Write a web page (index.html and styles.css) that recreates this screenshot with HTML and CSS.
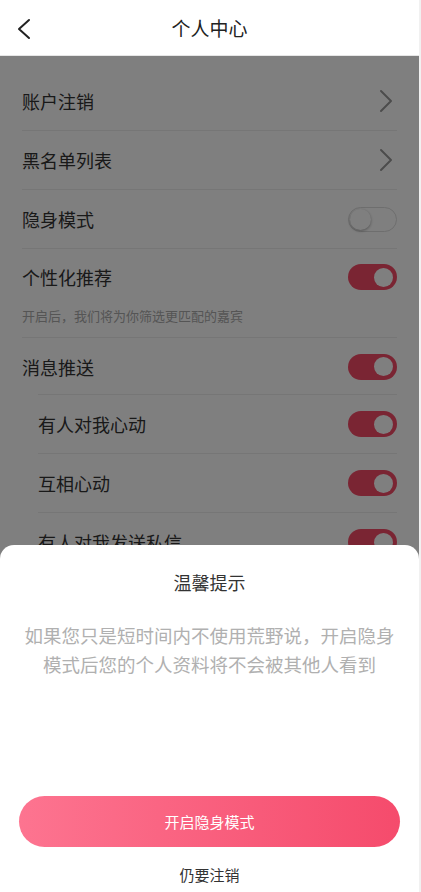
FILE: index.html
```html
<!DOCTYPE html>
<html lang="zh">
<head>
<meta charset="utf-8">
<link rel="stylesheet" href="styles.css">
</head>
<body>
<div class="page">
  <header class="header">
    <svg class="back" width="16" height="22" viewBox="0 0 16 22"><path d="M13 2 L3 11 L13 20" fill="none" stroke="#222" stroke-width="2" stroke-linecap="round" stroke-linejoin="round"/></svg>
    <h1 class="title">个人中心</h1>
  </header>
  <main class="list">
    <div class="row"><span class="label">账户注销</span><svg class="chev" width="14" height="24" viewBox="0 0 14 24"><path d="M2 2 L12 12 L2 22" fill="none" stroke="#999" stroke-width="2" stroke-linecap="round" stroke-linejoin="round"/></svg></div>
    <div class="row"><span class="label">黑名单列表</span><svg class="chev" width="14" height="24" viewBox="0 0 14 24"><path d="M2 2 L12 12 L2 22" fill="none" stroke="#999" stroke-width="2" stroke-linecap="round" stroke-linejoin="round"/></svg></div>
    <div class="row"><span class="label">隐身模式</span><span class="switch off"><span class="knob"></span></span></div>
    <div class="group">
      <div class="row plain"><span class="label">个性化推荐</span><span class="switch on"><span class="knob"></span></span></div>
      <p class="hint">开启后，我们将为你筛选更匹配的嘉宾</p>
    </div>
    <div class="row sub-line"><span class="label">消息推送</span><span class="switch on"><span class="knob"></span></span></div>
    <div class="row sub"><span class="label">有人对我心动</span><span class="switch on"><span class="knob"></span></span></div>
    <div class="row sub"><span class="label">互相心动</span><span class="switch on"><span class="knob"></span></span></div>
    <div class="row sub"><span class="label">有人对我发送私信</span><span class="switch on"><span class="knob"></span></span></div>
    <div class="row sub"><span class="label">有人给我评论</span><span class="switch on"><span class="knob"></span></span></div>
  </main>
  <div class="mask"></div>
  <section class="sheet">
    <h2 class="sheet-title">温馨提示</h2>
    <p class="sheet-text">如果您只是短时间内不使用荒野说，开启隐身模式后您的个人资料将不会被其他人看到</p>
    <div class="sheet-actions">
      <button class="primary">开启隐身模式</button>
      <button class="link">仍要注销</button>
    </div>
  </section>
</div>
</body>
</html>
```

FILE: styles.css
```css
* { box-sizing: border-box; margin: 0; padding: 0; }
html, body { width: 100%; height: 100%; overflow: hidden; }
body {
  font-family: "Noto Sans CJK SC", "Noto Sans", sans-serif;
  background: #f1f1f1;
  color: #333;
}
.page { position: relative; width: 419px; height: 892px; overflow: hidden; background: #fff; }
.header {
  height: 56px;
  display: flex;
  align-items: center;
  justify-content: center;
  position: relative;
  border-bottom: 1px solid #e6e6e6;
  background: #fff;
}
.back { position: absolute; left: 16px; top: 18px; }
.title { font-size: 19px; font-weight: 400; color: #222; }
.list { padding: 16px 22px 0 22px; }
.row {
  height: 59px;
  display: flex;
  align-items: center;
  justify-content: space-between;
  border-bottom: 1px solid #ececec;
}
.row.plain { border-bottom: none; height: 56px; }
.group { border-bottom: 1px solid #ececec; padding-bottom: 12px; }
.hint { font-size: 13px; color: #aaa; line-height: 18px; margin-top: 2px; }
.label { font-size: 18px; color: #333; }
.chev { margin-right: 4px; }
.row.sub-line { height: 57px; border-bottom: none; position: relative; }
.row.sub-line::after {
  content: ""; position: absolute; left: 16px; right: 0; bottom: 0; height: 1px; background: #ececec;
}
.row.sub { margin-left: 16px; }
.switch {
  width: 49px; height: 26px; border-radius: 13px; position: relative; flex: none;
}
.switch.on { background: #f44a66; }
.switch.off { background: #fff; border: 1px solid #dcdcdc; height: 25px; }
.knob {
  position: absolute; top: 3.5px; width: 19px; height: 19px; border-radius: 50%; background: #fff;
}
.switch.on .knob { right: 4px; }
.switch.off .knob { left: 1px; top: 1px; width: 21px; height: 21px; box-shadow: 0 1px 3px rgba(0,0,0,0.35); }
.mask {
  position: absolute; left: 0; top: 56px; right: 0; bottom: 0; background: rgba(0,0,0,0.5);
}
.sheet {
  position: absolute; left: 0; right: 0; bottom: 0; height: 347px;
  background: #fff; border-radius: 14px 14px 0 0;
  display: flex; flex-direction: column; align-items: center;
}
.sheet-title { font-size: 18px; font-weight: 400; color: #333; margin-top: 25px; line-height: 24px; }
.sheet-text {
  font-size: 18.5px; color: #b0b0b0; text-align: center; line-height: 29px;
  padding: 0 22px; margin-top: 27px;
}
.sheet-actions { margin-top: auto; width: 100%; display: flex; flex-direction: column; align-items: center; padding: 0 19px 5px 19px; }
.primary {
  width: 100%; height: 51px; border: none; border-radius: 26px;
  background: linear-gradient(90deg, #fd7490, #f54b6c);
  color: #fff; font-size: 15px; font-family: inherit;
}
.link {
  border: none; background: none; font-family: inherit; font-size: 15px; color: #333;
  margin-top: 14px; height: 26px;
}
```
